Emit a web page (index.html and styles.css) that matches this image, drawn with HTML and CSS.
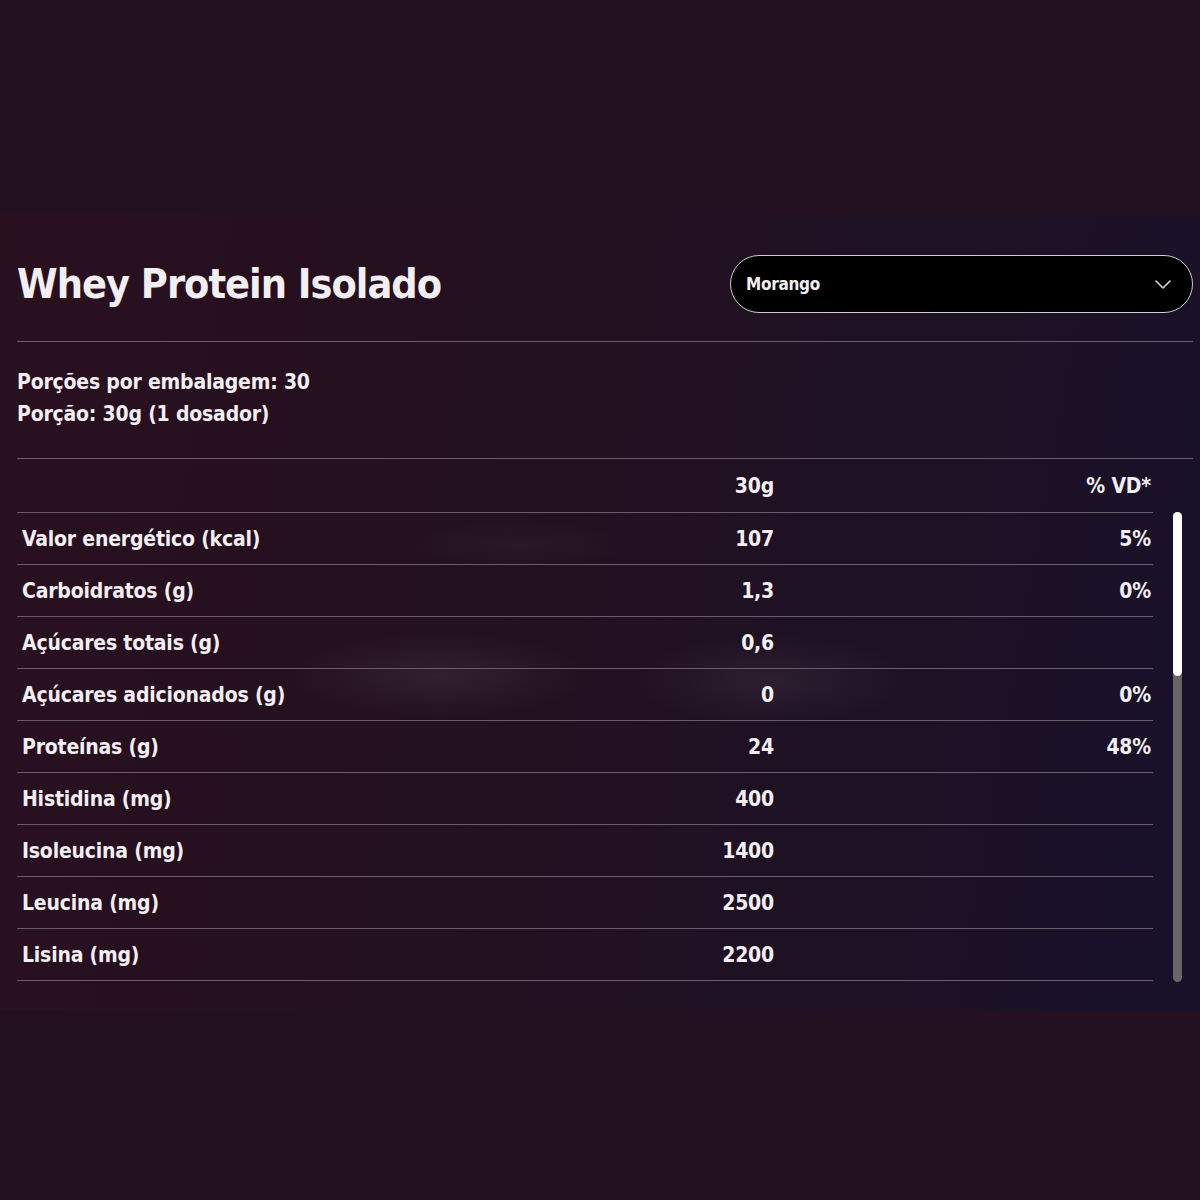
FILE: index.html
```html
<!DOCTYPE html>
<html lang="pt-BR">
<head>
    <meta charset="UTF-8">
    <meta name="viewport" content="width=device-width, initial-scale=1.0">
    <title>Whey Protein Isolado - Tabela nutricional</title>
    <link rel="stylesheet" href="styles.css">
</head>
<body>
    <section class="nutri">
        <div class="nutri-head">
            <h1>Whey Protein Isolado</h1>
            <div class="flavor">
                <span>Morango</span>
                <svg width="16" height="9" viewBox="0 0 16 9" fill="none">
                    <path d="M1 1l7 7 7-7" stroke="#d8d8d8" stroke-width="1.6" stroke-linecap="round" stroke-linejoin="round"/>
                </svg>
            </div>
        </div>

        <div class="servings">
            <p>Porções por embalagem: 30</p>
            <p>Porção: 30g (1 dosador)</p>
        </div>

        <div class="table-head">
            <span></span>
            <span class="num">30g</span>
            <span class="num">% VD*</span>
        </div>

        <div class="table-wrap">
            <div class="table-body">
                <div class="row"><span>Valor energético (kcal)</span><span class="num">107</span><span class="num">5%</span></div>
                <div class="row"><span>Carboidratos (g)</span><span class="num">1,3</span><span class="num">0%</span></div>
                <div class="row"><span>Açúcares totais (g)</span><span class="num">0,6</span><span class="num"></span></div>
                <div class="row"><span>Açúcares adicionados (g)</span><span class="num">0</span><span class="num">0%</span></div>
                <div class="row"><span>Proteínas (g)</span><span class="num">24</span><span class="num">48%</span></div>
                <div class="row"><span>Histidina (mg)</span><span class="num">400</span><span class="num"></span></div>
                <div class="row"><span>Isoleucina (mg)</span><span class="num">1400</span><span class="num"></span></div>
                <div class="row"><span>Leucina (mg)</span><span class="num">2500</span><span class="num"></span></div>
                <div class="row"><span>Lisina (mg)</span><span class="num">2200</span><span class="num"></span></div>
            </div>
            <div class="scrollbar"><div class="scrollbar-thumb"></div></div>
        </div>
    </section>
</body>
</html>
```

FILE: styles.css
```css
/* Base */
body {
    margin: 0;
    min-height: 1200px;
    background: #221020;
    color: #f3eef2;
    font-family: "DejaVu Sans Condensed", "Liberation Sans", sans-serif;
    font-weight: 700;
}

/* Painel da tabela */
.nutri {
    margin-top: 215px;
    padding: 40px 7px 28px 17px;
    background:
        radial-gradient(ellipse 150px 42px at 440px 460px, rgba(125, 115, 120, 0.16), transparent),
        radial-gradient(ellipse 140px 45px at 770px 465px, rgba(125, 115, 120, 0.14), transparent),
        radial-gradient(ellipse 110px 25px at 520px 330px, rgba(125, 115, 120, 0.08), transparent),
        linear-gradient(100deg, #29101f 0%, #221020 45%, #1c1126 80%, #17112a 100%);
}

.nutri-head {
    display: flex;
    justify-content: space-between;
    align-items: center;
    padding-bottom: 28px;
    border-bottom: 1px solid #6b5a6b;
}

h1 {
    margin: 0;
    font-size: 41px;
    line-height: 58px;
    letter-spacing: -1px;
}

.flavor {
    width: 463px;
    height: 58px;
    box-sizing: border-box;
    display: flex;
    align-items: center;
    justify-content: space-between;
    padding: 0 21px 0 15px;
    background: #000;
    border: 1.5px solid #cfcbcf;
    border-radius: 29px;
    font-size: 17px;
    letter-spacing: -0.3px;
}

/* Porções */
.servings {
    padding: 24px 0 28px;
    border-bottom: 1px solid #6b5a6b;
}

.servings p {
    margin: 0;
    font-size: 21px;
    line-height: 32px;
    letter-spacing: -0.2px;
}

/* Tabela */
.table-head,
.row {
    display: grid;
    grid-template-columns: 1fr 200px 377px;
    align-items: center;
    padding: 0 2px 0 5px;
    font-size: 21px;
    letter-spacing: -0.2px;
}

.table-head {
    width: 1129px;
    height: 53px;
}

.num {
    text-align: right;
}

.table-wrap {
    display: flex;
    align-items: flex-start;
    gap: 20px;
}

.table-body {
    width: 1136px;
    border-top: 1px solid #6b5a6b;
}

.row {
    height: 51px;
    border-bottom: 1px solid #6b5a6b;
}

/* Barra de rolagem */
.scrollbar {
    width: 9px;
    height: 470px;
    border-radius: 5px;
    background: #676567;
}

.scrollbar-thumb {
    height: 164px;
    border-radius: 5px;
    background: #fff;
}
```
